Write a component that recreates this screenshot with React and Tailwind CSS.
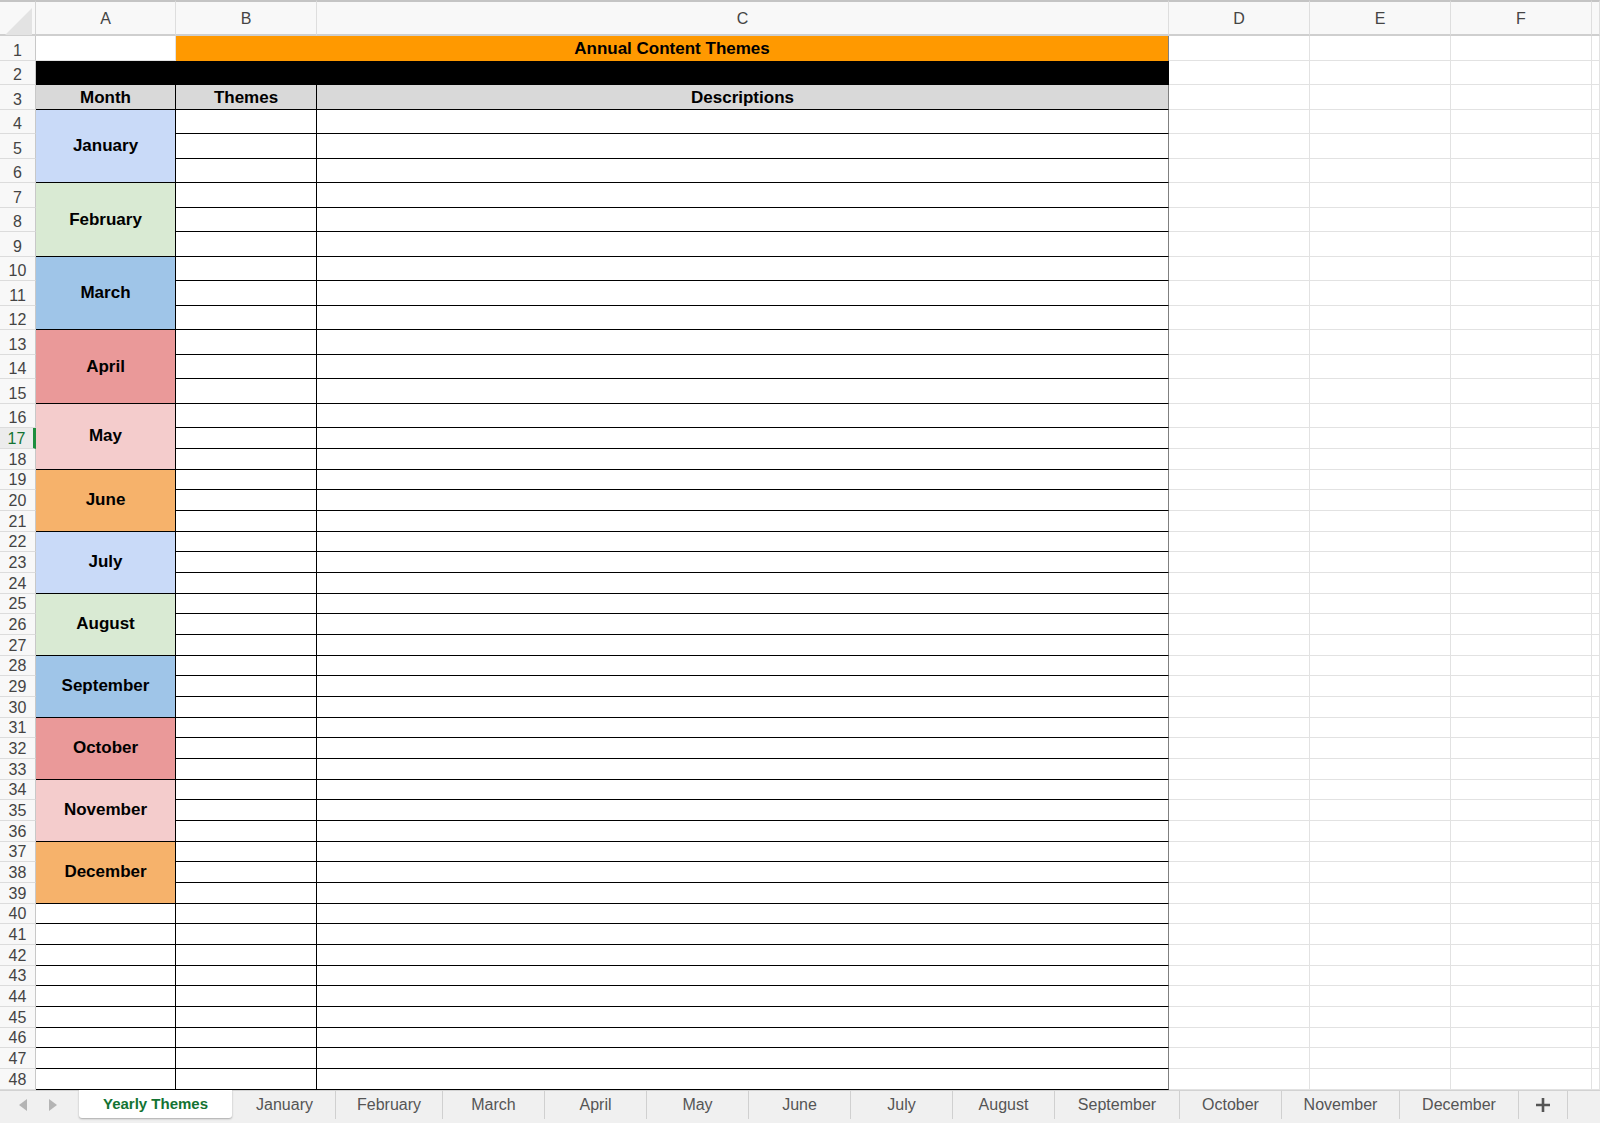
const months = [
  ["January", "bg-[#c9daf8]"],
  ["February", "bg-[#d9ead3]"],
  ["March", "bg-[#9fc5e8]"],
  ["April", "bg-[#ea9999]"],
  ["May", "bg-[#f4cccc]"],
  ["June", "bg-[#f6b26b]"],
  ["July", "bg-[#c9daf8]"],
  ["August", "bg-[#d9ead3]"],
  ["September", "bg-[#9fc5e8]"],
  ["October", "bg-[#ea9999]"],
  ["November", "bg-[#f4cccc]"],
  ["December", "bg-[#f6b26b]"],
];

const tabs = [
  ["January", "w-[102px]"],
  ["February", "w-[107px]"],
  ["March", "w-[102px]"],
  ["April", "w-[102px]"],
  ["May", "w-[102px]"],
  ["June", "w-[102px]"],
  ["July", "w-[102px]"],
  ["August", "w-[102px]"],
  ["September", "w-[125px]"],
  ["October", "w-[102px]"],
  ["November", "w-[118px]"],
  ["December", "w-[119px]"],
];

const grayCell = "border-r border-b border-[#e2e2e2] bg-white";
const blackCell = "border-r border-b border-black bg-white";

function RowHead({ n }) {
  const active = n === 17;
  return (
    <div
      className={
        "flex items-end justify-center border-b border-[#dcdcdc] text-[16px] leading-[18px] " +
        (active
          ? "bg-[#ececec] text-[#137333] border-r-[3px] border-r-[#1e8e3e]"
          : "bg-[#f8f8f8] text-[#444] border-r border-r-[#c8c8c8]")
      }
    >
      {n}
    </div>
  );
}

function Row({ n }) {
  const cells = [<RowHead key="h" n={n} />];

  if (n === 1) {
    cells.push(<div key="a" className={grayCell} />);
    cells.push(
      <div
        key="bc"
        className="col-span-2 flex items-center justify-center bg-[#ff9900] border-r border-[#808080] text-[17px] font-bold text-black"
      >
        Annual Content Themes
      </div>
    );
  } else if (n === 2) {
    cells.push(<div key="abc" className="col-span-3 bg-black" />);
  } else if (n === 3) {
    ["Month", "Themes", "Descriptions"].map((t, i) =>
      cells.push(
        <div
          key={t}
          className={
            "flex items-center justify-center pt-[2px] bg-[#d9d9d9] border-b border-r border-black text-[17px] font-bold text-black " +
            (i === 2 ? "border-r-[#808080]" : "")
          }
        >
          {t}
        </div>
      )
    );
  } else {
    if (n <= 39) {
      if ((n - 4) % 3 === 0) {
        const [name, bg] = months[(n - 4) / 3];
        cells.push(
          <div
            key="a"
            className={
              "row-span-3 flex items-center justify-center border-r border-b border-black text-[17px] font-bold text-black " +
              bg
            }
          >
            {name}
          </div>
        );
      }
    } else {
      cells.push(<div key="a" className={blackCell} />);
    }
    cells.push(<div key="b" className={blackCell} />);
    cells.push(<div key="c" className={blackCell + " border-r-[#808080]"} />);
  }

  ["d", "e", "f", "g"].forEach((k) => cells.push(<div key={k} className={grayCell} />));
  return cells;
}

function Arrow({ dir }) {
  return (
    <svg width="10" height="14" viewBox="0 0 10 14">
      {dir === "left" ? (
        <polygon points="9,1 1,7 9,13" fill="#b4b4b4" />
      ) : (
        <polygon points="1,1 9,7 1,13" fill="#b4b4b4" />
      )}
    </svg>
  );
}

export default function App() {
  const rows = Array.from({ length: 48 }, (_, i) => i + 1);

  return (
    <div className="w-[1600px] h-[1123px] overflow-hidden bg-white flex flex-col font-['Liberation_Sans',Arial,sans-serif]">
      <div className="h-[1090px] overflow-hidden grid grid-cols-[36px_140px_141px_852px_141px_141px_141px_1fr] grid-rows-[36px_repeat(16,24.52px)_repeat(32,20.68px)]">
        {/* column headers */}
        <div className="relative bg-[#f8f8f8] border-t-2 border-t-[#c4c4c4] border-r border-[#d4d4d4] border-b-2 border-b-[#cfcfcf]">
          <svg className="absolute left-[5px] top-[6px]" width="27" height="27" viewBox="0 0 27 27">
            <polygon points="0,27 27,0 27,27" fill="#e3e3e3" />
          </svg>
        </div>
        {["A", "B", "C", "D", "E", "F", ""].map((l, i) => (
          <div
            key={i}
            className="flex items-center justify-center pt-[2px] bg-[#f8f8f8] border-t-2 border-t-[#c4c4c4] border-r border-r-[#dedede] border-b-2 border-b-[#cfcfcf] text-[16px] text-[#444]"
          >
            {l}
          </div>
        ))}

        {rows.map((n) => (
          <Row key={n} n={n} />
        ))}
      </div>

      {/* sheet tabs */}
      <div className="flex-1 flex items-start bg-[#f0f0f0] border-t border-[#d2d2d2] text-[16px] text-[#555]">
        <div className="w-[79px] h-[28px] flex items-center pl-[18px] gap-[20px]">
          <Arrow dir="left" />
          <Arrow dir="right" />
        </div>
        <div className="w-[153px] h-[28px] -mt-px flex items-center justify-center bg-white rounded-b-[3px] shadow-[0_1px_2px_rgba(0,0,0,0.3)] text-[15px] font-bold text-[#137333]">
          Yearly Themes
        </div>
        <div className="w-[2px]" />
        {tabs.map(([t, w]) => (
          <div key={t} className={"h-[28px] flex items-center justify-center border-r border-[#d0d0d0] " + w}>
            {t}
          </div>
        ))}
        <div className="w-[49px] h-[28px] flex items-center justify-center border-r border-[#d0d0d0]">
          <svg width="16" height="16" viewBox="0 0 16 16">
            <path d="M8 1v14M1 8h14" stroke="#555" strokeWidth="2.6" />
          </svg>
        </div>
      </div>
    </div>
  );
}
